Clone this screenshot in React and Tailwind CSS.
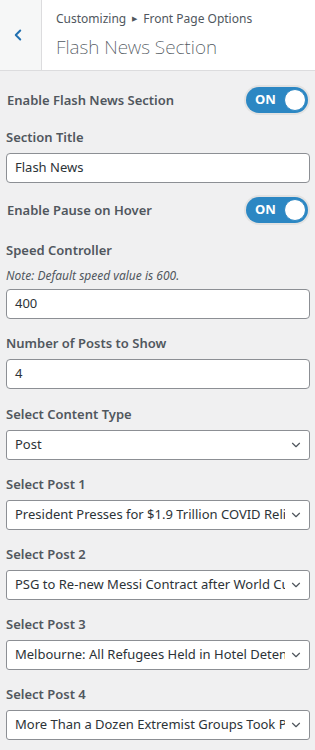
import { ChevronLeft, ChevronDown } from 'lucide-react';

const font = { fontFamily: '"Noto Sans", "Open Sans", sans-serif' };

const Toggle = () => (
  <div className="flex h-[26px] w-[62px] items-center justify-between rounded-full bg-[#2c87c3] pl-[9px] pr-[2px] shadow-[0_0_0_2px_#e2e2e2]">
    <span className="text-[13px] font-bold text-white">ON</span>
    <span className="h-[22px] w-[22px] rounded-full border border-[#2c87c3] bg-white" />
  </div>
);

const Label = ({ children }) => (
  <div className="text-[13px] font-semibold leading-[20px] text-[#50575e]">{children}</div>
);

const Input = ({ value }) => (
  <div className="mt-[6px] flex h-[30px] items-center rounded-[4px] border border-[#8c8f94] bg-white px-[8px] text-[13px] text-[#2c3338]">
    {value}
  </div>
);

const Select = ({ value }) => (
  <div className="mt-[6px] flex h-[30px] items-center rounded-[3px] border border-[#8c8f94] bg-white pl-[8px] pr-[6px]">
    <span className="flex-1 overflow-hidden whitespace-nowrap text-[13px] text-[#2c3338]">{value}</span>
    <ChevronDown className="ml-[4px] h-[14px] w-[14px] shrink-0 text-[#50575e]" strokeWidth={2} />
  </div>
);

const posts = [
  'President Presses for $1.9 Trillion COVID Relief',
  'PSG to Re-new Messi Contract after World Cup',
  'Melbourne: All Refugees Held in Hotel Detention',
  'More Than a Dozen Extremist Groups Took Part',
];

export default function App() {
  return (
    <div className="min-h-[750px] w-[315px] bg-[#f0f0f1]" style={font}>
      {/* Header */}
      <div className="flex h-[71px] border-b border-[#dcdcde] bg-white">
        <div className="flex w-[42px] items-center border-r border-[#dcdcde] bg-[#f6f7f7] pl-[9px]">
          <ChevronLeft className="h-[18px] w-[18px] text-[#2271b1]" strokeWidth={2.6} />
        </div>
        <div className="pl-[14px] pt-[9px]">
          <div className="flex items-center text-[12px] leading-[20px] text-[#50575e]">
            Customizing
            <span className="mx-[6px] text-[7px]">▶</span>
            Front Page Options
          </div>
          <div className="mt-[6px] text-[19px] font-extralight leading-[24px] text-[#50575e]">
            Flash News Section
          </div>
        </div>
      </div>

      {/* Controls */}
      <div className="px-[6px] pr-[5px]">
        <div className="mt-[16px] flex items-center justify-between pl-[1px] pr-[2px]">
          <Label>Enable Flash News Section</Label>
          <Toggle />
        </div>

        <div className="mt-[14px]">
          <Label>Section Title</Label>
          <Input value="Flash News" />
        </div>

        <div className="mt-[14px] flex items-center justify-between pl-[1px] pr-[2px]">
          <Label>Enable Pause on Hover</Label>
          <Toggle />
        </div>

        <div className="mt-[17px]">
          <Label>Speed Controller</Label>
          <div className="mb-[-1px] mt-[8px] text-[12px] italic leading-[16px] text-[#50575e]">
            Note: Default speed value is 600.
          </div>
          <Input value="400" />
        </div>

        <div className="mt-[14px]">
          <Label>Number of Posts to Show</Label>
          <Input value="4" />
        </div>

        <div className="mt-[15px]">
          <Label>Select Content Type</Label>
          <Select value="Post" />
        </div>

        {posts.map((p, i) => (
          <div key={i} className="mt-[14px]">
            <Label>Select Post {i + 1}</Label>
            <Select value={p} />
          </div>
        ))}
      </div>
    </div>
  );
}
